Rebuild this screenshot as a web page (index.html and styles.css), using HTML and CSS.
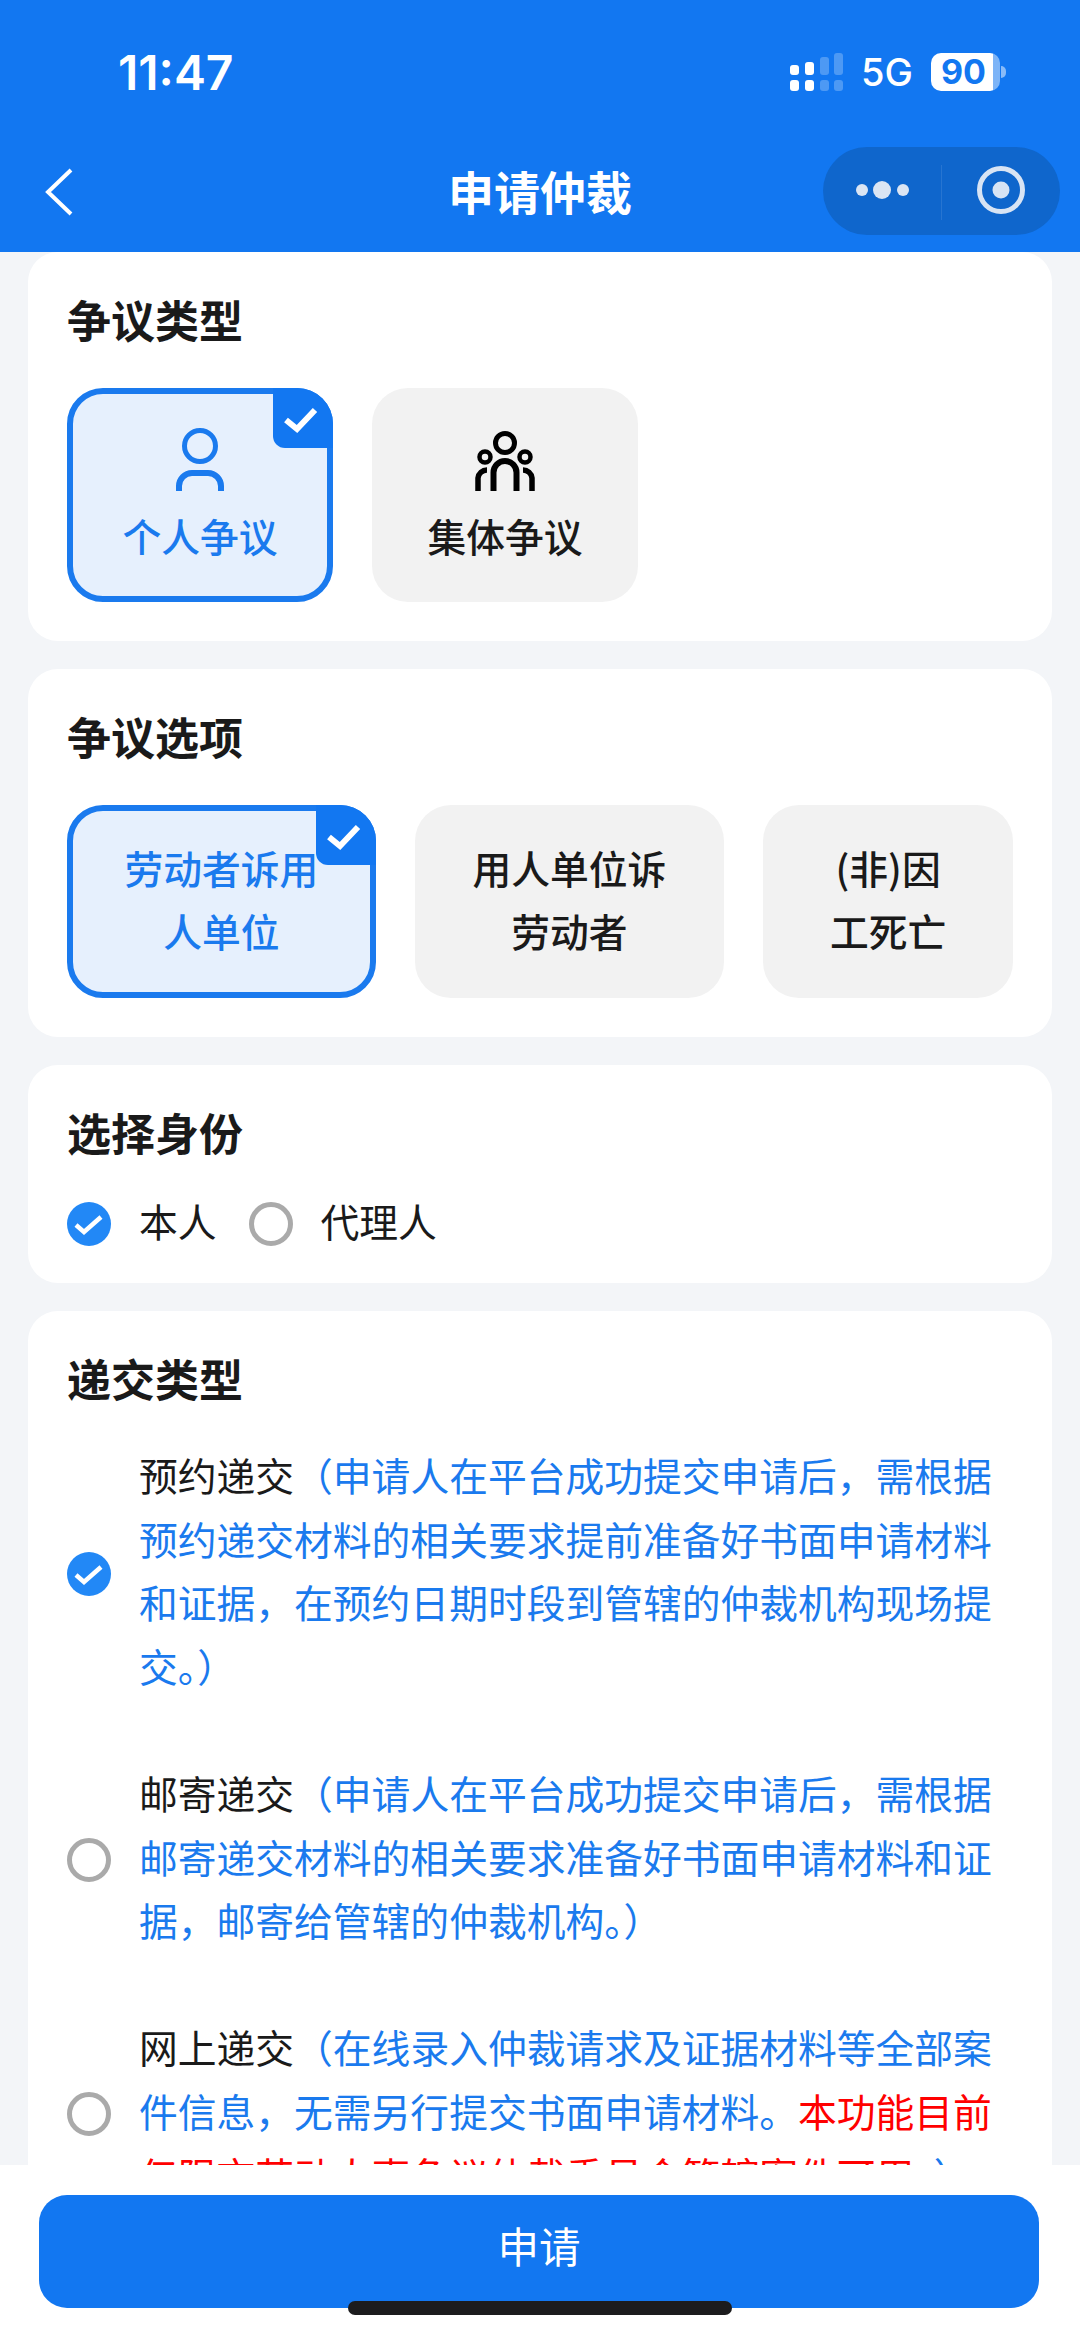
FILE: index.html
```html
<!DOCTYPE html>
<html lang="zh-CN">
<head>
<meta charset="utf-8">
<title>申请仲裁</title>
<link rel="stylesheet" href="styles.css">
</head>
<body>
<div class="app">
  <header class="header">
    <div class="status">
      <span class="time">11:47</span>
      <div class="status-right">
        <svg class="signal" width="56" height="40" viewBox="0 0 56 40" fill="#fff">
          <rect x="1" y="13" width="9" height="10" rx="3"/>
          <rect x="16" y="10" width="9" height="13" rx="3"/>
          <rect x="31" y="5" width="9" height="18" rx="3" opacity=".25"/>
          <rect x="45" y="1" width="9" height="22" rx="3" opacity=".25"/>
          <rect x="1" y="28" width="9" height="11" rx="3"/>
          <rect x="16" y="28" width="9" height="11" rx="3"/>
          <rect x="31" y="28" width="9" height="11" rx="3" opacity=".25"/>
          <rect x="45" y="28" width="9" height="11" rx="3" opacity=".25"/>
        </svg>
        <span class="net">5G</span>
        <div class="battery"><span class="battery-level">90</span></div>
      </div>
    </div>
    <nav class="nav">
      <svg class="back" width="30" height="50" viewBox="0 0 30 50" fill="none" stroke="#fff" stroke-width="4">
        <path d="M26 3 3 25l23 22"/>
      </svg>
      <h1 class="nav-title">申请仲裁</h1>
      <div class="capsule">
        <svg class="capsule-more" width="118" height="88" viewBox="0 0 118 88" fill="#dbe5f3">
          <circle cx="39" cy="43" r="6"/>
          <circle cx="59" cy="43" r="9"/>
          <circle cx="80" cy="43" r="6"/>
        </svg>
        <svg class="capsule-target" width="118" height="88" viewBox="0 0 118 88" fill="none">
          <circle cx="60" cy="43" r="21.5" stroke="#d8e4f4" stroke-width="5"/>
          <circle cx="60" cy="43" r="8.5" fill="#d8e4f4"/>
        </svg>
      </div>
    </nav>
  </header>

  <main class="main">
    <section class="card">
      <h2 class="card-title">争议类型</h2>
      <div class="type-row">
        <div class="choice type selected">
          <span class="corner"><svg width="60" height="60" viewBox="0 0 60 60" fill="none" stroke="#fff" stroke-width="6"><path d="M13 32l11 9 18-19"/></svg></span>
          <svg class="type-icon" width="64" height="64" viewBox="0 0 64 64" fill="none" stroke="#1a7aee">
            <circle cx="32" cy="18" r="15.5" stroke-width="5"/>
            <path d="M11 63v-5a13 13 0 0 1 13-13h16a13 13 0 0 1 13 13v5" stroke-width="6"/>
          </svg>
          <span class="type-label">个人争议</span>
        </div>
        <div class="choice type">
          <svg class="type-icon" width="64" height="64" viewBox="0 0 64 64" fill="none" stroke="#000">
            <circle cx="32" cy="15" r="9.5" stroke-width="5"/>
            <circle cx="12" cy="29" r="5.5" stroke-width="4.5"/>
            <circle cx="52" cy="29" r="5.5" stroke-width="4.5"/>
            <path d="M20.500 63V44.500a11.500 11.500 0 0 1 23 0V63" stroke-width="6"/>
            <path d="M5 63V50a9 9 0 0 1 9-8M59 63V50a9 9 0 0 0-9-8" stroke-width="5.500"/>
          </svg>
          <span class="type-label">集体争议</span>
        </div>
      </div>
    </section>

    <section class="card">
      <h2 class="card-title">争议选项</h2>
      <div class="option-row">
        <div class="choice option selected">
          <span class="corner"><svg width="60" height="60" viewBox="0 0 60 60" fill="none" stroke="#fff" stroke-width="6"><path d="M13 32l11 9 18-19"/></svg></span>
          劳动者诉用人单位
        </div>
        <div class="choice option">用人单位诉劳动者</div>
        <div class="choice option">(非)因工死亡</div>
      </div>
    </section>

    <section class="card card-identity">
      <h2 class="card-title">选择身份</h2>
      <div class="identity-row">
        <svg class="radio" width="44" height="44" viewBox="0 0 44 44"><circle cx="22" cy="22" r="22" fill="#2288f6"/><path d="M9 23l8 7 17-15" fill="none" stroke="#fff" stroke-width="4.500"/></svg>
        <span class="identity-label">本人</span>
        <svg class="radio" width="44" height="44" viewBox="0 0 44 44"><circle cx="22" cy="22" r="19.500" fill="#fff" stroke="#aaa" stroke-width="5"/></svg>
        <span class="identity-label">代理人</span>
      </div>
    </section>

    <section class="card card-submit">
      <h2 class="card-title">递交类型</h2>
      <div class="submit-list">
        <div class="submit-row">
          <svg class="radio" width="44" height="44" viewBox="0 0 44 44"><circle cx="22" cy="22" r="22" fill="#2288f6"/><path d="M9 23l8 7 17-15" fill="none" stroke="#fff" stroke-width="4.500"/></svg>
          <p class="submit-text">预约递交<span class="hint">（申请人在平台成功提交申请后，需根据预约递交材料的相关要求提前准备好书面申请材料和证据，在预约日期时段到管辖的仲裁机构现场提交。）</span></p>
        </div>
        <div class="submit-row">
          <svg class="radio" width="44" height="44" viewBox="0 0 44 44"><circle cx="22" cy="22" r="19.500" fill="#fff" stroke="#aaa" stroke-width="5"/></svg>
          <p class="submit-text">邮寄递交<span class="hint">（申请人在平台成功提交申请后，需根据邮寄递交材料的相关要求准备好书面申请材料和证据，邮寄给管辖的仲裁机构。）</span></p>
        </div>
        <div class="submit-row">
          <svg class="radio" width="44" height="44" viewBox="0 0 44 44"><circle cx="22" cy="22" r="19.500" fill="#fff" stroke="#aaa" stroke-width="5"/></svg>
          <p class="submit-text">网上递交<span class="hint">（在线录入仲裁请求及证据材料等全部案件信息，无需另行提交书面申请材料。<span class="warn">本功能目前仅限市劳动人事争议仲裁委员会管辖案件可用。</span>）</span></p>
        </div>
      </div>
    </section>
  </main>

  <footer class="footer">
    <button class="submit-btn" type="button">申请</button>
    <span class="home-bar"></span>
  </footer>
</div>
</body>
</html>
```
FILE: styles.css
```css
* { box-sizing: border-box; }
html, body { margin: 0; padding: 0; }
body {
  width: 1080px;
  height: 2337px;
  overflow: hidden;
  background: #f3f5f8;
  color: #1a1a1a;
  font-family: "Noto Sans CJK SC", "Noto Sans", sans-serif;
}
.app {
  width: 1080px;
  height: 2337px;
  display: flex;
  flex-direction: column;
  overflow: hidden;
}

/* Header */
.header {
  flex: none;
  height: 252px;
  background: #1277f1;
  color: #fff;
}
.status {
  height: 144px;
  padding: 0 80px 0 118px;
  display: flex;
  align-items: center;
  justify-content: space-between;
}
.time {
  font-family: Inter, "Liberation Sans", sans-serif;
  font-size: 48px;
  font-weight: 600;
}
.status-right {
  display: flex;
  align-items: center;
  gap: 18px;
}
.signal { margin-right: -2px; }
.net {
  font-family: Inter, "Liberation Sans", sans-serif;
  font-size: 38px;
  font-weight: 500;
  line-height: 40px;
}
.battery {
  position: relative;
  width: 69px;
  height: 38px;
  border-radius: 10px;
  background: linear-gradient(90deg, #fff 0, #fff 62px, rgba(255, 255, 255, .45) 62px);
  color: #1277f1;
  font-family: Inter, "Liberation Sans", sans-serif;
  font-size: 34px;
  font-weight: 700;
  line-height: 38px;
  padding-left: 10px;
}
.battery::after {
  content: "";
  position: absolute;
  left: 70px;
  top: 13px;
  width: 5px;
  height: 12px;
  border-radius: 0 6px 6px 0;
  background: rgba(255, 255, 255, .5);
}
.nav {
  margin-top: 3px;
  height: 88px;
  display: grid;
  grid-template-columns: minmax(0, 1fr) auto minmax(0, 1fr);
  align-items: center;
  padding: 0 20px;
}
.back { display: block; margin: 2px 0 0 25px; }
.nav-title {
  margin: 0 0 3px;
  font-size: 46px;
  font-weight: 700;
  line-height: 60px;
}
.capsule {
  justify-self: end;
  flex: none;
  width: 237px;
  min-width: 237px;
  height: 88px;
  border-radius: 44px;
  background: #0f66cc;
  display: flex;
  position: relative;
}
.capsule::after {
  content: "";
  position: absolute;
  left: 118px;
  top: 18px;
  width: 1px;
  height: 55px;
  background: rgba(255, 255, 255, .1);
}
.capsule-more, .capsule-target { display: block; flex: none; }

/* Main */
.main {
  flex: 1;
  min-height: 0;
  overflow: hidden;
  padding: 0 28px;
  display: flex;
  flex-direction: column;
  gap: 28px;
}
.card {
  flex: none;
  background: #fff;
  border-radius: 30px;
  padding: 36px 39px 39px;
}
.card-title {
  margin: 0 0 38px;
  font-size: 44px;
  font-weight: 700;
  line-height: 62px;
  color: #1a1a1a;
}
.card-identity { padding-bottom: 28px; }
.card-identity .card-title { margin-bottom: 29px; }
.card-submit .card-title { margin-bottom: 34px; }

.type-row, .option-row { display: flex; }
.type-row { gap: 39px; }
.option-row { gap: 39px; }

.choice {
  position: relative;
  border: 6px solid transparent;
  border-radius: 36px;
  background: #f2f2f2;
  font-size: 38.770px;
  font-weight: 500;
  line-height: 63.500px;
  color: #1a1a1a;
  text-align: center;
}
.choice.selected {
  border-color: #1a7aee;
  background: #e6f0fd;
  color: #1a7aee;
}
.corner {
  position: absolute;
  top: -6px;
  right: -6px;
  width: 60px;
  height: 60px;
  background: #1277f1;
  border-radius: 0 36px 0 12px;
}
.corner svg { display: block; }

.type {
  width: 266px;
  height: 214px;
  padding-top: 34px;
  display: flex;
  flex-direction: column;
  align-items: center;
}
.type-icon { display: block; flex: none; }
.type-label { margin-top: 12px; line-height: 63px; }

.option {
  height: 193px;
  padding: 0 50px 5px;
  display: flex;
  align-items: center;
  justify-content: center;
}
.option:nth-child(1) { width: 309px; }
.option:nth-child(2) { width: 310px; }
.option:nth-child(3) { width: 250px; }

.identity-row {
  display: flex;
  align-items: center;
  height: 63px;
}
.radio { display: block; flex: none; }
.identity-label {
  margin-left: 28px;
  margin-right: 32px;
  padding-bottom: 6px;
  font-size: 38.770px;
  line-height: 63px;
}

.submit-list {
  display: flex;
  flex-direction: column;
  gap: 56.200px;
}
.submit-row {
  display: flex;
  align-items: center;
  gap: 28px;
}
.submit-text {
  margin: 0;
  flex: 1;
  padding-bottom: 7px;
  font-size: 38.770px;
  line-height: 63.700px;
  color: #1a1a1a;
}
.hint { color: #1a7aee; }
.warn { color: #f00; }

/* Footer */
.footer {
  flex: none;
  position: relative;
  height: 172px;
  background: #fff;
  padding: 30px 41px 0 39px;
}
.submit-btn {
  display: block;
  width: 100%;
  height: 113px;
  border: 0;
  border-radius: 28px;
  background: #1277f1;
  color: #fff;
  font-family: inherit;
  font-size: 41.500px;
  font-weight: 400;
  padding: 0 0 14px;
}
.home-bar {
  position: absolute;
  left: 348px;
  top: 136px;
  width: 384px;
  height: 14px;
  border-radius: 7px;
  background: #1c1c1e;
}
```
